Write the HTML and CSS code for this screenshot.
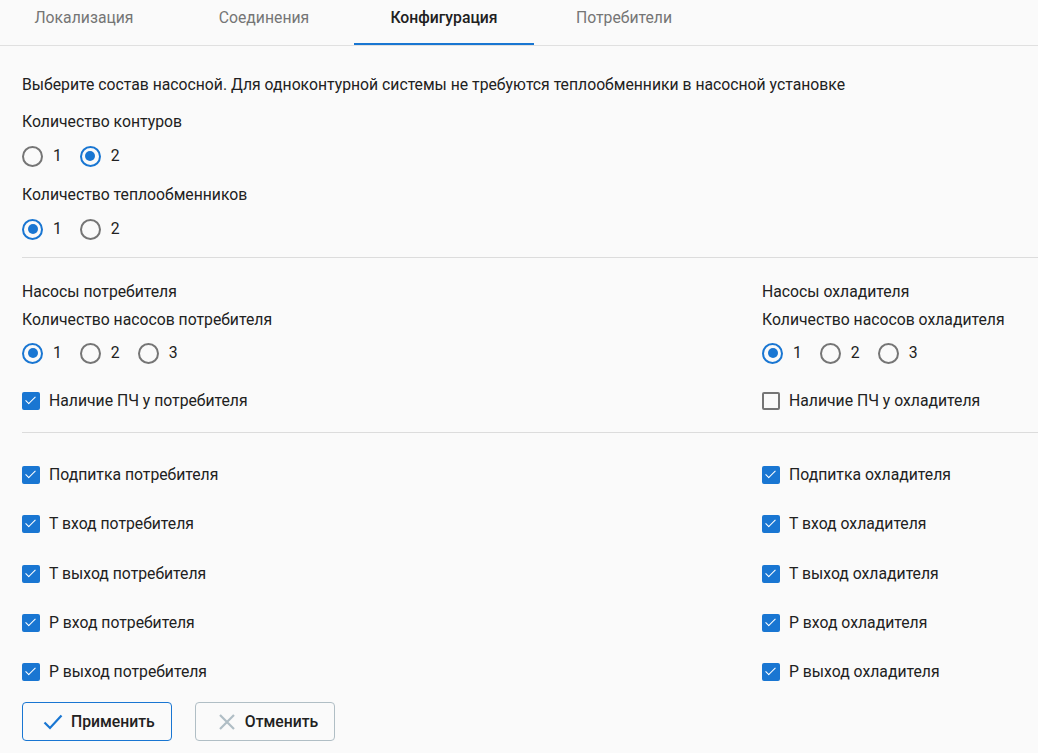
FILE: index.html
```html
<!DOCTYPE html>
<html lang="ru">

<head>
    <meta charset="UTF-8">
    <meta name="viewport" content="width=device-width, initial-scale=1.0">
    <title>Конфигурация</title>
    <link rel="stylesheet" href="styles.css">
</head>

<body>

    <nav class="tabs">
        <a class="tab">Локализация</a>
        <a class="tab">Соединения</a>
        <a class="tab is-active">Конфигурация</a>
        <a class="tab">Потребители</a>
    </nav>

    <main class="config">
        <p class="intro">Выберите состав насосной. Для одноконтурной системы не требуются теплообменники в насосной установке</p>

        <div class="field">
            <div class="field-label">Количество контуров</div>
            <div class="radio-group">
                <label class="radio"><input type="radio" name="circuits"><span class="radio-mark"></span>1</label>
                <label class="radio"><input type="radio" name="circuits" checked><span class="radio-mark"></span>2</label>
            </div>
        </div>

        <div class="field">
            <div class="field-label">Количество теплообменников</div>
            <div class="radio-group">
                <label class="radio"><input type="radio" name="exchangers" checked><span class="radio-mark"></span>1</label>
                <label class="radio"><input type="radio" name="exchangers"><span class="radio-mark"></span>2</label>
            </div>
        </div>

        <hr class="divider">

        <div class="columns pumps">
            <div class="column">
                <div class="section-title">Насосы потребителя</div>
                <div class="field-label compact">Количество насосов потребителя</div>
                <div class="radio-group">
                    <label class="radio"><input type="radio" name="consumerPumps" checked><span class="radio-mark"></span>1</label>
                    <label class="radio"><input type="radio" name="consumerPumps"><span class="radio-mark"></span>2</label>
                    <label class="radio"><input type="radio" name="consumerPumps"><span class="radio-mark"></span>3</label>
                </div>
                <label class="checkbox vfd"><input type="checkbox" checked><span class="checkbox-mark"></span>Наличие ПЧ у потребителя</label>
            </div>
            <div class="column">
                <div class="section-title">Насосы охладителя</div>
                <div class="field-label compact">Количество насосов охладителя</div>
                <div class="radio-group">
                    <label class="radio"><input type="radio" name="coolerPumps" checked><span class="radio-mark"></span>1</label>
                    <label class="radio"><input type="radio" name="coolerPumps"><span class="radio-mark"></span>2</label>
                    <label class="radio"><input type="radio" name="coolerPumps"><span class="radio-mark"></span>3</label>
                </div>
                <label class="checkbox vfd"><input type="checkbox"><span class="checkbox-mark"></span>Наличие ПЧ у охладителя</label>
            </div>
        </div>

        <hr class="divider">

        <div class="columns sensors">
            <div class="column checkbox-list">
                <label class="checkbox"><input type="checkbox" checked><span class="checkbox-mark"></span>Подпитка потребителя</label>
                <label class="checkbox"><input type="checkbox" checked><span class="checkbox-mark"></span>T вход потребителя</label>
                <label class="checkbox"><input type="checkbox" checked><span class="checkbox-mark"></span>T выход потребителя</label>
                <label class="checkbox"><input type="checkbox" checked><span class="checkbox-mark"></span>P вход потребителя</label>
                <label class="checkbox"><input type="checkbox" checked><span class="checkbox-mark"></span>P выход потребителя</label>
            </div>
            <div class="column checkbox-list">
                <label class="checkbox"><input type="checkbox" checked><span class="checkbox-mark"></span>Подпитка охладителя</label>
                <label class="checkbox"><input type="checkbox" checked><span class="checkbox-mark"></span>T вход охладителя</label>
                <label class="checkbox"><input type="checkbox" checked><span class="checkbox-mark"></span>T выход охладителя</label>
                <label class="checkbox"><input type="checkbox" checked><span class="checkbox-mark"></span>P вход охладителя</label>
                <label class="checkbox"><input type="checkbox" checked><span class="checkbox-mark"></span>P выход охладителя</label>
            </div>
        </div>

        <div class="actions">
            <button class="btn btn-apply" type="button">
                <svg class="btn-icon" viewBox="0 0 20 20" width="20" height="20">
                    <path d="M1.5 10.5 L7 16 L18.5 3.5" fill="none" stroke="#1976d2" stroke-width="2.2" />
                </svg>
                Применить
            </button>
            <button class="btn btn-cancel" type="button">
                <svg class="btn-icon" viewBox="0 0 20 20" width="20" height="20">
                    <path d="M3 3 L17 17 M17 3 L3 17" fill="none" stroke="#b0bec5" stroke-width="2.2" />
                </svg>
                Отменить
            </button>
        </div>
    </main>

</body>

</html>
```

FILE: styles.css
```css
/* --- Page --- */
body {
    margin: 0;
    font-family: Roboto, "Noto Sans", Arial, sans-serif;
    font-size: 15.75px;
    line-height: 20px;
    color: #212121;
    background-color: #fafafa;
}

/* --- Tabs --- */
.tabs {
    display: flex;
    margin-left: -6px;
    border-bottom: 1px solid #e0e0e0;
}

.tab {
    width: 180px;
    height: 45px;
    box-sizing: border-box;
    padding-top: 8px;
    text-align: center;
    color: #757575;
    border-bottom: 2px solid transparent;
    cursor: pointer;
}

.tab.is-active {
    color: #212121;
    font-weight: 500;
    border-bottom-color: #1976d2;
}

/* --- Form --- */
.config {
    padding: 29px 0 0 22px;
}

.intro {
    margin: 0;
}

.field {
    margin-top: 17px;
}

.field-label {
    margin-bottom: 12px;
}

.field-label.compact {
    margin-top: 8px;
    margin-bottom: 11px;
}

.divider {
    margin: 16px 0 0;
    border: 0;
    border-top: 1px solid #dcdcdc;
}

.columns {
    display: grid;
    grid-template-columns: 740px 1fr;
}

.pumps {
    margin-top: 24px;
}

.pumps + .divider {
    margin-top: 19px;
}

.sensors {
    margin-top: 30px;
}

/* radio */
.radio-group {
    display: flex;
    gap: 18px;
    height: 24px;
    align-items: center;
}

.radio,
.checkbox {
    display: flex;
    align-items: center;
    cursor: pointer;
}

.radio input,
.checkbox input {
    display: none;
}

.radio-mark {
    width: 21px;
    height: 21px;
    box-sizing: border-box;
    margin-right: 10px;
    border: 2px solid #757575;
    border-radius: 50%;
    position: relative;
}

.radio input:checked + .radio-mark {
    border-color: #1976d2;
}

.radio input:checked + .radio-mark::after {
    content: '';
    position: absolute;
    left: 3.5px;
    top: 3.5px;
    width: 10px;
    height: 10px;
    border-radius: 50%;
    background: #1976d2;
}

/* checkbox */
.checkbox {
    height: 24px;
}

.vfd {
    margin-top: 24px;
}

.checkbox-list {
    display: flex;
    flex-direction: column;
    gap: 25.3px;
}

.checkbox-mark {
    width: 18px;
    height: 18px;
    box-sizing: border-box;
    margin-right: 9px;
    border: 2px solid #757575;
    border-radius: 2px;
    position: relative;
}

.checkbox input:checked + .checkbox-mark {
    background: #1976d2;
    border-color: #1976d2;
}

.checkbox input:checked + .checkbox-mark::after {
    content: '';
    position: absolute;
    left: 4px;
    top: 0px;
    width: 4px;
    height: 9px;
    border: solid #fff;
    border-width: 0 1.6px 1.6px 0;
    transform: rotate(45deg);
}

/* --- Buttons --- */
.actions {
    display: flex;
    gap: 23px;
    margin-top: 18px;
}

.btn {
    display: flex;
    align-items: center;
    gap: 8px;
    height: 39px;
    padding: 0 16px 0 20px;
    font-family: inherit;
    font-size: 15.75px;
    font-weight: 500;
    color: #212121;
    background: #fafafa;
    border: 1px solid #1976d2;
    border-radius: 4px;
    cursor: pointer;
}

.btn-cancel {
    border-color: #b0bec5;
    padding-left: 21px;
}

.btn-icon {
    flex-shrink: 0;
}
```
